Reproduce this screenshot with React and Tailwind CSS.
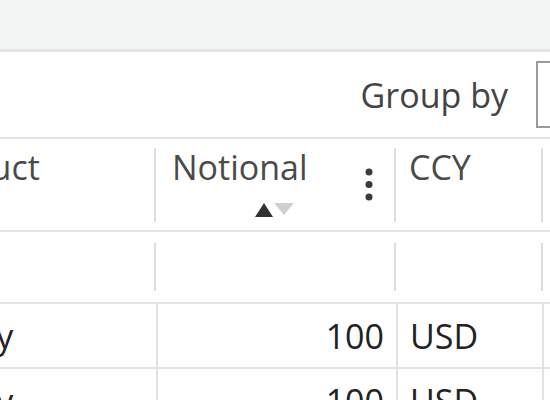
import React from "react";

const rows = [
  { product: "Equity", notional: 100, ccy: "USD" },
  { product: "Equity", notional: 100, ccy: "USD" },
];

function SortArrows() {
  return (
    <svg width="40" height="14" viewBox="0 0 40 14">
      <polygon points="0,14 9,0 18,14" fill="#333" />
      <polygon points="19,0 39,0 29,12" fill="#cfcfcf" />
    </svg>
  );
}

function MenuDots() {
  return (
    <svg width="8" height="34" viewBox="0 0 8 34">
      <circle cx="4" cy="4" r="3.5" fill="#3a3a3a" />
      <circle cx="4" cy="16.5" r="3.5" fill="#3a3a3a" />
      <circle cx="4" cy="29" r="3.5" fill="#3a3a3a" />
    </svg>
  );
}

function HeaderDivider() {
  return <div className="w-[2px] h-[74px] bg-[#dddddd] shrink-0" />;
}

function FilterDivider() {
  return <div className="w-[2px] h-[48px] bg-[#dddddd] shrink-0" />;
}

export default function App() {
  return (
    <div className="w-[550px] h-[400px] overflow-hidden bg-white font-['Open_Sans',sans-serif] text-[34px] leading-[34px]">
      <div className="h-[52px] bg-[#f3f4f4] border-b-[3px] border-[#e4e6e6]" />

      <div className="h-[85px] flex items-center">
        <div className="flex-1" />
        <span className="text-[#444]">Group by</span>
        <div className="ml-[28px] w-[14px] h-[67px] border-2 border-r-0 border-[#9a9a9a] shrink-0" />
      </div>

      <div className="border-t-2 border-[#e2e2e2]">
        <div className="flex ml-[-93px] h-[93px] border-b-2 border-[#e2e2e2] items-center text-[#4a4a4a]">
          <div className="w-[247px] self-stretch pl-[8px] pt-[11px] shrink-0">Product</div>
          <HeaderDivider />
          <div className="w-[238px] self-stretch flex flex-col shrink-0">
            <div className="flex items-start pl-[16px] pr-[21px] pt-[11px]">
              <span className="flex-1">Notional</span>
              <div className="mt-[18px]">
                <MenuDots />
              </div>
            </div>
            <div className="flex justify-center mt-[1px]">
              <SortArrows />
            </div>
          </div>
          <HeaderDivider />
          <div className="w-[145px] self-stretch pl-[13px] pt-[11px] shrink-0">CCY</div>
          <HeaderDivider />
        </div>

        <div className="flex ml-[-93px] h-[72px] border-b-2 border-[#e2e2e2] items-center">
          <div className="w-[247px] shrink-0" />
          <FilterDivider />
          <div className="w-[238px] shrink-0" />
          <FilterDivider />
          <div className="w-[145px] shrink-0" />
          <FilterDivider />
        </div>

        {rows.map((r, i) => (
          <div
            key={i}
            className="flex ml-[-93px] h-[65px] border-b-2 border-[#e2e2e2] text-[#222]"
          >
            <div className="w-[251px] shrink-0 flex items-center pl-[8px] border-r-2 border-[#e2e2e2]">
              {r.product}
            </div>
            <div className="w-[240px] shrink-0 flex items-center justify-end pr-[12px] border-r-2 border-[#e2e2e2]">
              {r.notional}
            </div>
            <div className="w-[146px] shrink-0 flex items-center pl-[12px] border-r-2 border-[#e2e2e2]">
              {r.ccy}
            </div>
          </div>
        ))}
      </div>
    </div>
  );
}
